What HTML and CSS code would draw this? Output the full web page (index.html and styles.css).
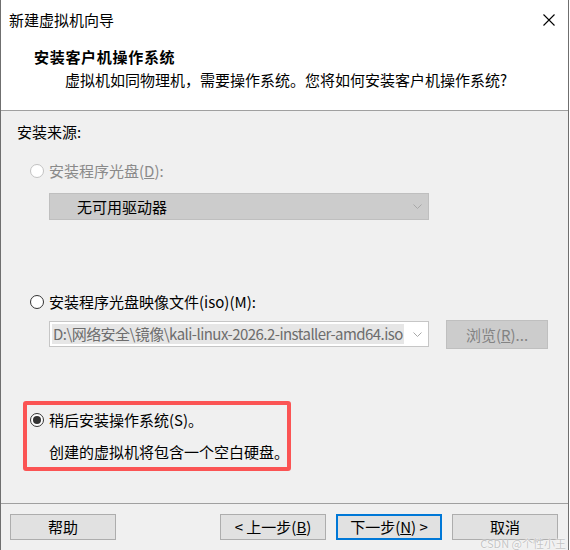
FILE: index.html
```html
<!DOCTYPE html>
<html lang="zh-CN">
<head>
<meta charset="utf-8">
<title>新建虚拟机向导</title>
<link rel="stylesheet" href="styles.css">
</head>
<body>
<div class="window">
  <div class="top">
    <div class="titlebar">
      <span class="title">新建虚拟机向导</span>
      <svg class="close" width="12" height="12" viewBox="0 0 12 12"><path d="M0.5 0.5 L11.5 11.5 M11.5 0.5 L0.5 11.5" stroke="#000" stroke-width="1.1" fill="none"/></svg>
    </div>
    <div class="header">
      <div class="heading">安装客户机操作系统</div>
      <div class="subtitle">虚拟机如同物理机，需要操作系统。您将如何安装客户机操作系统?</div>
    </div>
  </div>

  <div class="content">
    <div class="label">安装来源:</div>

    <div class="option disabled first">
      <span class="radio"></span>
      <span class="opt-text">安装程序光盘(<u>D</u>):</span>
    </div>
    <div class="combo combo-disabled">
      <span class="combo-text indent">无可用驱动器</span>
      <svg class="chev" width="9" height="5" viewBox="0 0 9 5"><path d="M0.5 0.5 L4.5 4.5 L8.5 0.5" stroke="#a8a8a8" fill="none"/></svg>
    </div>

    <div class="option second">
      <span class="radio"></span>
      <span class="opt-text">安装程序光盘映像文件(iso)(M):</span>
    </div>
    <div class="iso-row">
      <div class="combo combo-iso">
        <span class="combo-text sel">D:\网络安全\镜像\kali-linux-2026.2-installer-amd64.iso</span>
        <svg class="chev" width="9" height="5" viewBox="0 0 9 5"><path d="M0.5 0.5 L4.5 4.5 L8.5 0.5" stroke="#a8a8a8" fill="none"/></svg>
      </div>
      <div class="btn btn-disabled browse">浏览(<u>R</u>)...</div>
    </div>

    <div class="highlight">
      <div class="option checked-row">
        <span class="radio checked"></span>
        <span class="opt-text">稍后安装操作系统(S)。</span>
      </div>
      <div class="note">创建的虚拟机将包含一个空白硬盘。</div>
    </div>
  </div>

  <div class="footer">
    <div class="btn">帮助</div>
    <div class="btn push">&lt; 上一步(<u>B</u>)</div>
    <div class="btn default">下一步(<u>N</u>) &gt;</div>
    <div class="btn">取消</div>
  </div>

  <div class="watermark">CSDN @个性小王</div>
</div>
</body>
</html>
```

FILE: styles.css
```css
* { box-sizing: border-box; }

html, body {
  margin: 0;
  padding: 0;
  background: #ffffff;
}

body {
  font-family: "Noto Sans CJK SC", "Microsoft YaHei", sans-serif;
  font-size: 15px;
  color: #000;
}

.window {
  position: relative;
  width: 569px;
  height: 550px;
  border-left: 1px solid #6f6f6f;
  border-right: 1px solid #6f6f6f;
  background: #f0f0f0;
  display: flex;
  flex-direction: column;
  overflow: hidden;
}

.top {
  background: #ffffff;
  border-bottom: 1px solid #a0a0a0;
}

.titlebar {
  height: 40px;
  display: flex;
  align-items: center;
  justify-content: space-between;
  padding-left: 8px;
  padding-right: 13px;
}

.title {
  line-height: 20px;
}

.close {
  display: block;
}

.header {
  padding-top: 7px;
  padding-bottom: 20px;
  height: 70px;
}

.heading {
  font-weight: bold;
  font-size: 15px;
  letter-spacing: 0.7px;
  line-height: 20px;
  padding-left: 33px;
}

.subtitle {
  margin-top: 3px;
  line-height: 20px;
  padding-left: 64px;
}

.content {
  flex: 1;
  padding-top: 11px;
  padding-left: 16px;
}

.label {
  line-height: 20px;
}

.option {
  display: flex;
  align-items: center;
  height: 20px;
  margin-left: 13px;
}

.option.first { margin-top: 19px; }
.option.second { margin-top: 72px; }

.radio {
  width: 14px;
  height: 14px;
  border-radius: 50%;
  border: 1px solid #333333;
  background: #ffffff;
  margin-right: 5px;
  display: flex;
  align-items: center;
  justify-content: center;
  flex: none;
}

.radio.checked::after {
  content: "";
  width: 8px;
  height: 8px;
  border-radius: 50%;
  background: #333333;
}

.disabled .radio {
  border-color: #c2c2c2;
}

.disabled .opt-text {
  color: #8a8a8a;
}

.opt-text {
  line-height: 20px;
  white-space: nowrap;
}

.combo {
  width: 380px;
  display: flex;
  align-items: center;
  justify-content: space-between;
  margin-left: 32px;
  padding-right: 6px;
}

.combo-disabled {
  margin-top: 12px;
  height: 27px;
  background: #cccccc;
  border: 1px solid #bfbfbf;
}

.combo-text {
  line-height: 19px;
  white-space: nowrap;
}

.combo-text.indent {
  padding-left: 27px;
}

.iso-row {
  display: flex;
  align-items: flex-start;
  margin-top: 8px;
}

.combo-iso {
  flex: none;
  margin-top: 1px;
  height: 26px;
  background: #ffffff;
  border: 1px solid #c6c6c6;
  padding-left: 2px;
}

.combo-text.sel {
  background: #e6e6e6;
  color: #6d6d6d;
  padding-left: 1px;
  padding-right: 1px;
  letter-spacing: -0.55px;
  height: 20px;
  line-height: 20px;
  min-width: 0;
  overflow: hidden;
}

.chev {
  display: block;
  flex: none;
}

.btn {
  height: 26px;
  width: 106px;
  background: #e1e1e1;
  border: 1px solid #adadad;
  display: flex;
  align-items: center;
  justify-content: center;
  line-height: 20px;
  white-space: nowrap;
}

.btn-disabled {
  background: #cccccc;
  border-color: #bfbfbf;
  color: #838383;
}

.browse {
  flex: none;
  width: 102px;
  height: 29px;
  margin-left: 17px;
}

.highlight {
  margin-top: 52px;
  margin-left: 6px;
  width: 268px;
  border: 4px solid #fb5454;
  border-radius: 3px;
  padding: 5px 0 5px 3px;
}

.highlight .option {
  margin-left: 0;
}

.note {
  margin-top: 12px;
  margin-left: 19px;
  line-height: 20px;
  white-space: nowrap;
}

.footer {
  height: 47px;
  border-top: 1px solid #a0a0a0;
  display: flex;
  align-items: flex-start;
  gap: 10px;
  padding: 10px 10px 0 9px;
}

.footer .push {
  margin-left: auto;
}

.btn.default {
  border: 2px solid #0078d7;
}

.watermark {
  position: absolute;
  right: 2px;
  bottom: 1px;
  font-size: 11px;
  line-height: 11px;
  color: #c4c4c4;
  text-shadow: 0 0 2px #ffffff, 0 0 1px #ffffff;
  white-space: nowrap;
}
```
